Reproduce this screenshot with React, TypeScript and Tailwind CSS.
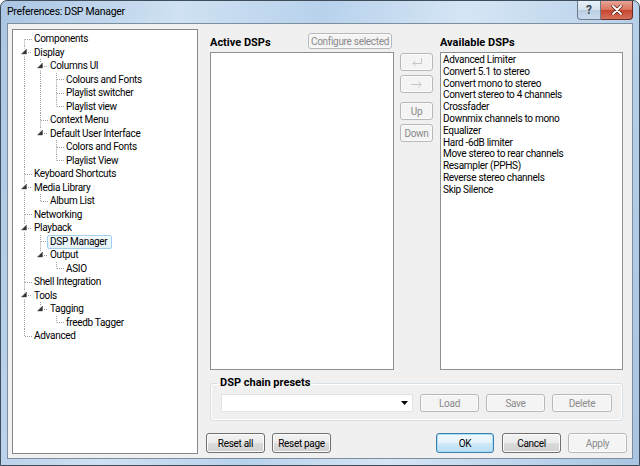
import React from "react";

type TreeItem = { level: number; label: string; parent?: boolean; selected?: boolean };

const treeItems: TreeItem[] = [
  { level: 0, label: "Components" },
  { level: 0, label: "Display", parent: true },
  { level: 1, label: "Columns UI", parent: true },
  { level: 2, label: "Colours and Fonts" },
  { level: 2, label: "Playlist switcher" },
  { level: 2, label: "Playlist view" },
  { level: 1, label: "Context Menu" },
  { level: 1, label: "Default User Interface", parent: true },
  { level: 2, label: "Colors and Fonts" },
  { level: 2, label: "Playlist View" },
  { level: 0, label: "Keyboard Shortcuts" },
  { level: 0, label: "Media Library", parent: true },
  { level: 1, label: "Album List" },
  { level: 0, label: "Networking" },
  { level: 0, label: "Playback", parent: true },
  { level: 1, label: "DSP Manager", selected: true },
  { level: 1, label: "Output", parent: true },
  { level: 2, label: "ASIO" },
  { level: 0, label: "Shell Integration" },
  { level: 0, label: "Tools", parent: true },
  { level: 1, label: "Tagging", parent: true },
  { level: 2, label: "freedb Tagger" },
  { level: 0, label: "Advanced" },
];

const availableDsps = [
  "Advanced Limiter",
  "Convert 5.1 to stereo",
  "Convert mono to stereo",
  "Convert stereo to 4 channels",
  "Crossfader",
  "Downmix channels to mono",
  "Equalizer",
  "Hard -6dB limiter",
  "Move stereo to rear channels",
  "Resampler (PPHS)",
  "Reverse stereo channels",
  "Skip Silence",
];

function hasNextSibling(index: number) {
  const level = treeItems[index].level;
  for (let j = index + 1; j < treeItems.length; j++) {
    if (treeItems[j].level < level) return false;
    if (treeItems[j].level === level) return true;
  }
  return false;
}

function ancestorAt(index: number, level: number) {
  for (let j = index - 1; j >= 0; j--) {
    if (treeItems[j].level === level) return j;
  }
  return -1;
}

const DOT = "#a0a0a0";

function GuideCell({ h, on }: { h: number; on: boolean }) {
  return (
    <svg width={16} height={h} className="shrink-0">
      {on && <line x1={8.5} y1={0} x2={8.5} y2={h} stroke={DOT} strokeDasharray="1 1" />}
    </svg>
  );
}

function ConnectorCell({ h, first, next, parent }: { h: number; first: boolean; next: boolean; parent?: boolean }) {
  const c = Math.floor(h / 2) + 0.5;
  if (parent) {
    return (
      <svg width={16} height={h} className="shrink-0">
        {!first && <line x1={8.5} y1={0} x2={8.5} y2={c - 4} stroke={DOT} strokeDasharray="1 1" />}
        {next && <line x1={8.5} y1={c + 4} x2={8.5} y2={h} stroke={DOT} strokeDasharray="1 1" />}
        <line x1={12} y1={c} x2={16} y2={c} stroke={DOT} strokeDasharray="1 1" />
        <polygon points={`10.5,${c - 3.5} 10.5,${c + 1.5} 5.5,${c + 1.5}`} fill="#2e2e2e" stroke="#5a5a5a" strokeWidth={0.5} />
      </svg>
    );
  }
  return (
    <svg width={16} height={h} className="shrink-0">
      {!first && <line x1={8.5} y1={0} x2={8.5} y2={c} stroke={DOT} strokeDasharray="1 1" />}
      {next && <line x1={8.5} y1={c} x2={8.5} y2={h} stroke={DOT} strokeDasharray="1 1" />}
      <line x1={9} y1={c} x2={16} y2={c} stroke={DOT} strokeDasharray="1 1" />
    </svg>
  );
}

function Tree() {
  return (
    <div className="w-[186px] shrink-0 border border-[#828790] bg-white pt-[2px] pl-[3px] tracking-[-0.3px]">
      {treeItems.map((item, i) => {
        const h = i % 2 === 0 ? 14 : 13;
        const guides = [];
        for (let k = 0; k < item.level; k++) {
          guides.push(<GuideCell key={k} h={h} on={hasNextSibling(ancestorAt(i, k))} />);
        }
        return (
          <div key={i} className={i % 2 === 0 ? "flex h-[14px] items-center" : "flex h-[13px] items-center"}>
            {guides}
            <ConnectorCell h={h} first={i === 0} next={hasNextSibling(i)} parent={item.parent} />
            <span
              className={
                item.selected
                  ? "-ml-px rounded-[2px] border border-[#9fcfee] bg-[linear-gradient(#f6fbfe,#e4f2fc)] pl-[2px] pr-[4px] leading-[12px] whitespace-nowrap"
                  : "-ml-px border border-transparent pl-[2px] pr-[4px] leading-[12px] whitespace-nowrap"
              }
            >
              {item.label}
            </span>
          </div>
        );
      })}
    </div>
  );
}

type BtnKind = "normal" | "disabled" | "default";

function Btn({ children, kind = "normal", className = "" }: { children: React.ReactNode; kind?: BtnKind; className?: string }) {
  const base = "flex items-center justify-center rounded-[3px] border shrink-0 whitespace-nowrap tracking-[-0.3px] ";
  const look =
    kind === "disabled"
      ? "border-[#b5b9bc] bg-[#f4f4f4] text-[#8a8a8a] shadow-[inset_0_0_0_1px_#fbfbfb]"
      : kind === "default"
        ? "border-[#3c7fb1] bg-[linear-gradient(#f2f9fd_0%,#e4f3fc_50%,#cfeaf9_50%,#b9def4_100%)] text-black shadow-[inset_0_0_0_1px_#a9dcf6]"
        : "border-[#707070] bg-[linear-gradient(#f2f2f2_0%,#ebebeb_50%,#dddddd_50%,#cfcfcf_100%)] text-black shadow-[inset_0_0_0_1px_#fcfcfc]";
  return <div className={base + look + " " + className}>{children}</div>;
}

export default function App() {
  return (
    <div className="relative flex h-[466px] w-[640px] flex-col overflow-hidden rounded-t-[7px] border border-[#3f4d5b] bg-[linear-gradient(100deg,#aac6e3_0%,#cfe1f3_25%,#b8d2ec_45%,#d5e5f5_65%,#bcd4ec_85%,#a9c4e1_100%)] font-['Roboto',sans-serif] text-[10px] text-black">
      {/* title bar */}
      <div className="flex h-[22px] shrink-0 items-center pl-[6px] text-[10.5px] tracking-[-0.3px]">Preferences: DSP Manager</div>
      <div className="absolute right-[6px] top-0 flex">
        <div className="flex h-[19px] w-[24px] items-center justify-center rounded-bl-[4px] border border-t-0 border-[#6d7c8c] bg-[linear-gradient(#e9f1f9_0%,#d3e1ee_50%,#bccfe2_50%,#c9dbec_100%)] text-[12px] font-bold text-[#3b4856]">
          ?
        </div>
        <div className="flex h-[19px] w-[32px] items-center justify-center rounded-br-[4px] border border-l-0 border-t-0 border-[#6b2a25] bg-[linear-gradient(#e8a493_0%,#d9735d_50%,#c5442c_50%,#d4705a_100%)]">
          <svg width="12" height="10" viewBox="0 0 12 10">
            <path d="M2 1 L10 9 M10 1 L2 9" stroke="#5a1a12" strokeWidth="3.2" strokeLinecap="round" />
            <path d="M2 1 L10 9 M10 1 L2 9" stroke="#ffffff" strokeWidth="1.8" strokeLinecap="round" />
          </svg>
        </div>
      </div>

      {/* client area */}
      <div className="mx-[6px] flex h-[436px] shrink-0 border border-[#7d8e9f] bg-[#f0f0f0] pl-[4px] pt-[5px] pb-[4px]">
        <Tree />
        <div className="ml-[8px] flex w-[421px] flex-col">
          <div className="flex pl-[4px] pt-[4px]">
            {/* active */}
            <div className="flex w-[184px] flex-col">
              <div className="flex h-[19px] items-start justify-between pr-[2px]">
                <span className="mt-[2px] text-[11px] font-bold">Active DSPs</span>
                <Btn kind="disabled" className="h-[16px] w-[84px] rounded-[2px] text-[10px]">
                  Configure selected
                </Btn>
              </div>
              <div className="h-[318px] border border-[#8e8f8f] bg-white" />
            </div>
            {/* move buttons */}
            <div className="ml-[6px] flex w-[33px] flex-col pt-[20px]">
              <Btn kind="disabled" className="h-[18px]">
                <svg width="14" height="8" viewBox="0 0 14 8">
                  <path d="M11.5 0.5 V5.5 H3 M5.5 3 L3 5.5 L5.5 8" fill="none" stroke="#c4c4c4" strokeWidth="1" />
                </svg>
              </Btn>
              <Btn kind="disabled" className="mt-[4px] h-[18px]">
                <svg width="14" height="8" viewBox="0 0 14 8">
                  <path d="M1 4.5 H11 M8.5 1.5 L11 4.5 L8.5 7.5" fill="none" stroke="#c4c4c4" strokeWidth="1" />
                </svg>
              </Btn>
              <Btn kind="disabled" className="mt-[9px] h-[18px]">
                Up
              </Btn>
              <Btn kind="disabled" className="mt-[4px] h-[18px]">
                Down
              </Btn>
            </div>
            {/* available */}
            <div className="ml-[7px] flex w-[183px] flex-col">
              <div className="flex h-[19px] items-start">
                <span className="mt-[2px] text-[11px] font-bold">Available DSPs</span>
              </div>
              <div className="h-[318px] border border-[#8e8f8f] bg-white pl-[2px] pt-[1px] tracking-[-0.3px]">
                {availableDsps.map((d) => (
                  <div key={d} className="h-[11.8px] leading-[11.8px] whitespace-nowrap">
                    {d}
                  </div>
                ))}
              </div>
            </div>
          </div>

          {/* presets group */}
          <fieldset className="ml-[4px] mt-[7px] w-[413px] rounded-[3px] border border-[#d5dfe5] px-[10px] pb-[8px] pt-[5px] shadow-[inset_0_0_0_1px_#ffffff]">
            <legend className="ml-[-4px] px-[3px] text-[11px] font-bold leading-[12px]">DSP chain presets</legend>
            <div className="flex items-center">
              <div className="flex h-[18px] w-[192px] items-center justify-end border border-[#e2e3ea] bg-white pr-[4px]">
                <svg width="7" height="4" viewBox="0 0 7 4">
                  <path d="M0 0 H7 L3.5 4 Z" fill="#000" />
                </svg>
              </div>
              <Btn kind="disabled" className="ml-[7px] h-[18px] w-[59px]">
                Load
              </Btn>
              <Btn kind="disabled" className="ml-[7px] h-[18px] w-[59px]">
                Save
              </Btn>
              <Btn kind="disabled" className="ml-[7px] h-[18px] w-[60px]">
                Delete
              </Btn>
            </div>
          </fieldset>

          {/* bottom buttons */}
          <div className="mt-[12px] flex">
            <Btn className="h-[20px] w-[59px]">Reset all</Btn>
            <Btn className="ml-[7px] h-[20px] w-[59px]">Reset page</Btn>
            <Btn kind="default" className="ml-[105px] h-[20px] w-[58px]">
              OK
            </Btn>
            <Btn className="ml-[8px] h-[20px] w-[59px]">Cancel</Btn>
            <Btn kind="disabled" className="ml-[7px] h-[20px] w-[59px]">
              Apply
            </Btn>
          </div>
        </div>
      </div>
    </div>
  );
}
